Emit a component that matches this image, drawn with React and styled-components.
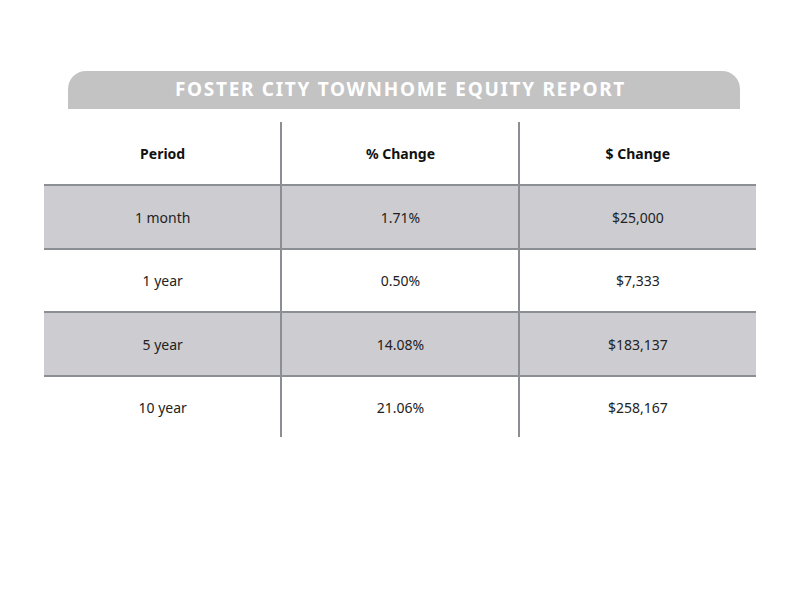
import React from "react";
import styled, { createGlobalStyle } from "styled-components";

const Global = createGlobalStyle`
  html, body { margin: 0; padding: 0; background: #ffffff; }
  body { font-family: "Noto Sans", "Open Sans", sans-serif; }
`;

const Page = styled.div`
  width: 800px;
  height: 600px;
  padding-top: 71px;
  box-sizing: border-box;
  display: flex;
  flex-direction: column;
  align-items: center;
`;

const TitleBar = styled.div`
  width: 672px;
  height: 38px;
  margin-left: 8px;
  padding: 0 7px 3px 0;
  box-sizing: border-box;
  background: #c4c3c4;
  border-radius: 18px 18px 0 0;
  display: flex;
  align-items: center;
  justify-content: center;
  color: #ffffff;
  font-family: "Noto Sans", sans-serif;
  font-weight: 700;
  font-size: 19px;
  letter-spacing: 1.7px;
`;

const Table = styled.div`
  width: 712px;
  margin-top: 13px;
  display: grid;
  grid-template-columns: repeat(3, 1fr);
`;

const Cell = styled.div`
  box-sizing: border-box;
  height: ${(p) => p.$h}px;
  display: flex;
  align-items: center;
  justify-content: center;
  background: ${(p) => (p.$shaded ? "#cdcdd1" : "#ffffff")};
  border-top: ${(p) => (p.$topLine ? "2px solid #8b8e93" : "none")};
  border-left: ${(p) => (p.$leftLine ? "2px solid #8b8e93" : "none")};
  margin-left: ${(p) => (p.$leftLine ? "-1px" : "0")};
  font-family: "Noto Sans", sans-serif;
  font-size: 14px;
  font-weight: ${(p) => (p.$head ? 700 : 400)};
  color: ${(p) => (p.$head ? "#111111" : "#222222")};
`;

const headers = ["Period", "% Change", "$ Change"];
const rows = [
  ["1 month", "1.71%", "$25,000"],
  ["1 year", "0.50%", "$7,333"],
  ["5 year", "14.08%", "$183,137"],
  ["10 year", "21.06%", "$258,167"],
];
const rowHeights = [64, 63, 64, 62];

export default function App() {
  return (
    <>
      <Global />
      <Page>
        <TitleBar>FOSTER CITY TOWNHOME EQUITY REPORT</TitleBar>
        <Table>
          {headers.map((h, i) => (
            <Cell key={h} $head $h={62} $leftLine={i > 0}>
              {h}
            </Cell>
          ))}
          {rows.map((r, ri) =>
            r.map((v, ci) => (
              <Cell
                key={ri + "-" + ci}
                $topLine
                $leftLine={ci > 0}
                $shaded={ri % 2 === 0}
                $h={rowHeights[ri]}
              >
                {v}
              </Cell>
            ))
          )}
        </Table>
      </Page>
    </>
  );
}
